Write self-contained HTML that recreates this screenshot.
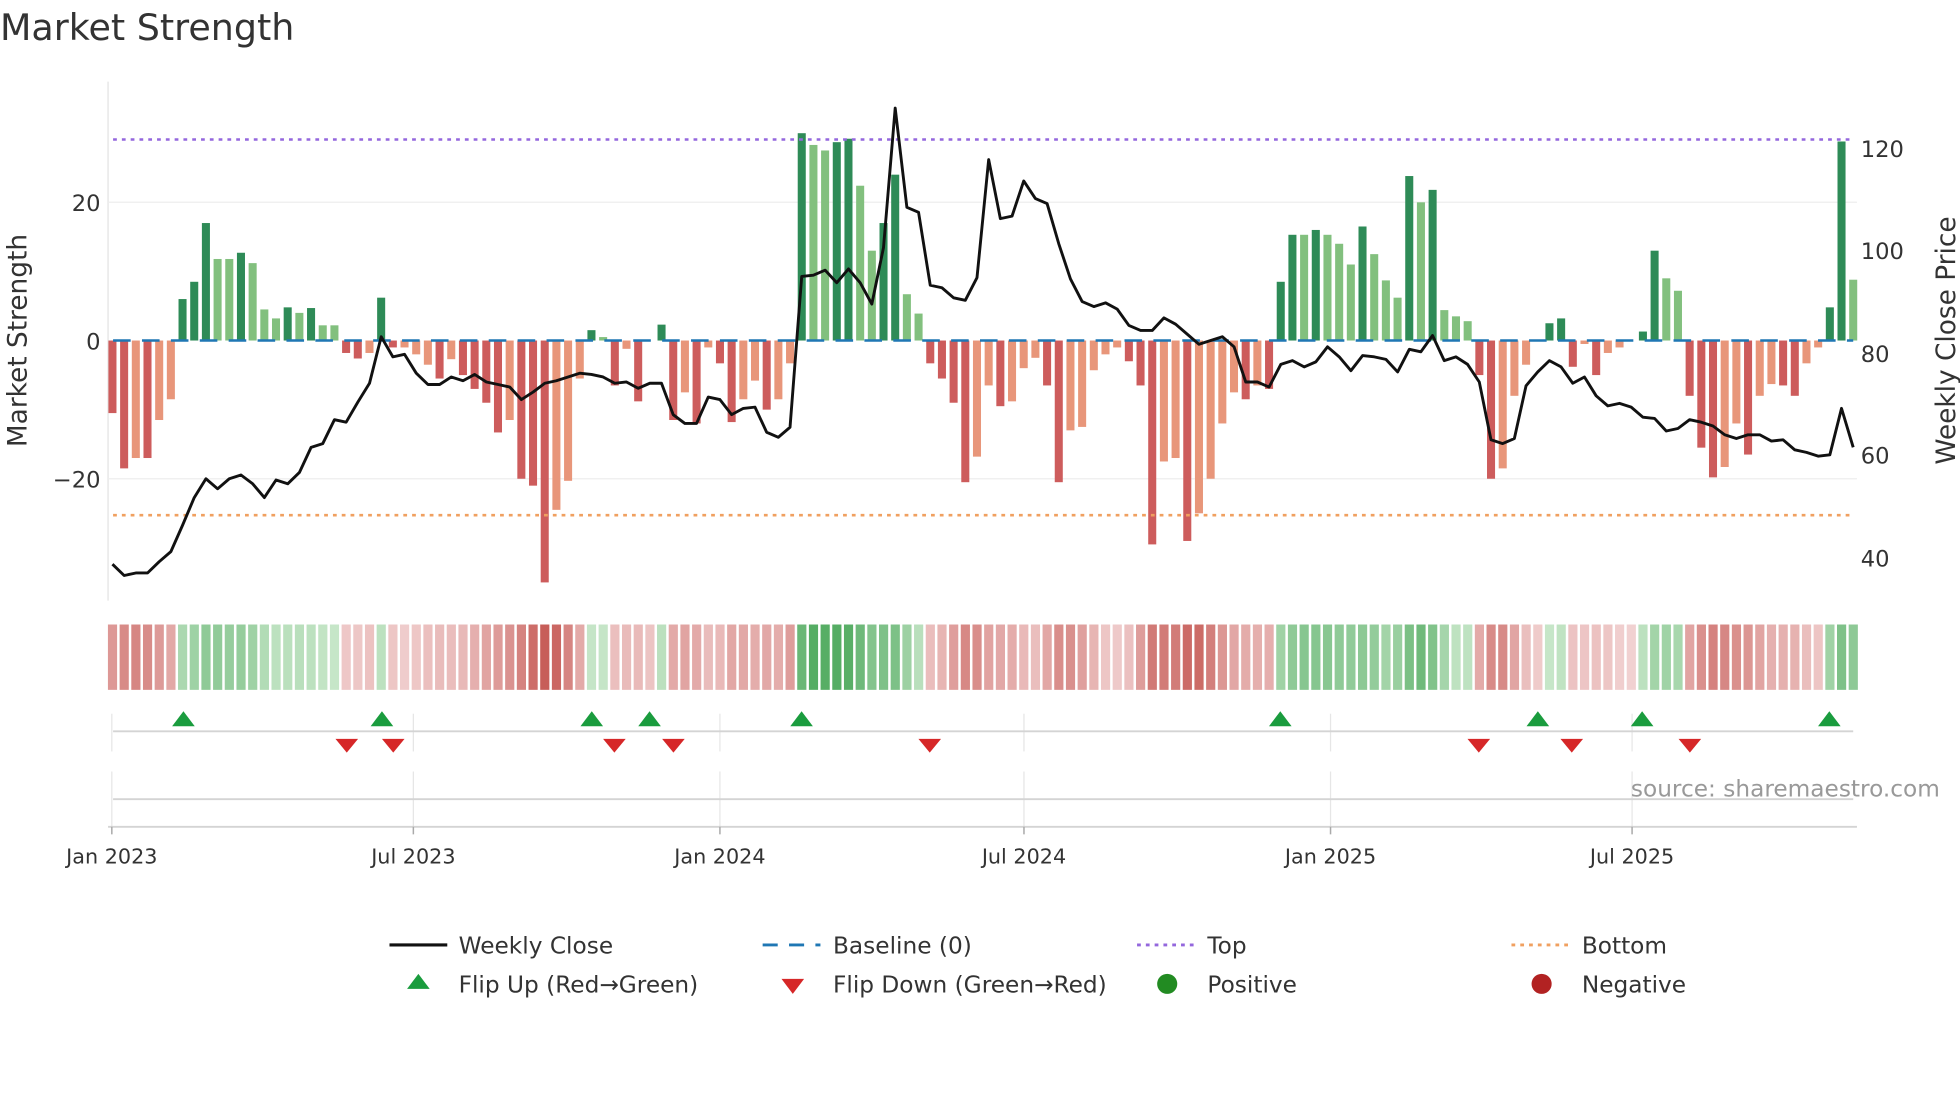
<!DOCTYPE html>
<html><head><meta charset="utf-8"><style>
html,body{margin:0;padding:0;background:#fff;}
svg{display:block;}
text{font-family:"DejaVu Sans","Liberation Sans",sans-serif;fill:#333;}
</style></head><body>
<svg id="s" width="1960" height="1102" viewBox="0 0 1560 877" preserveAspectRatio="none" xmlns="http://www.w3.org/2000/svg">
<rect width="1560" height="877" fill="#fff"/>
<text x="0" y="32" font-size="29">Market Strength</text>
<line x1="86" y1="65" x2="86" y2="478" stroke="#e3e3e3" stroke-width="1"/>
<line x1="86" y1="161" x2="1478" y2="161" stroke="#eeeeee" stroke-width="1"/>
<line x1="86" y1="381" x2="1478" y2="381" stroke="#eeeeee" stroke-width="1"/>
<g font-size="18">
<text x="80" y="168" text-anchor="end">20</text>
<text x="80" y="278" text-anchor="end">0</text>
<text x="80" y="388" text-anchor="end">−20</text>
<text x="1481" y="125">120</text>
<text x="1481" y="206">100</text>
<text x="1481" y="288">80</text>
<text x="1481" y="369">60</text>
<text x="1481" y="451">40</text>
</g>
<text font-size="21" transform="translate(21,271) rotate(-90)" text-anchor="middle">Market Strength</text>
<text font-size="21" transform="translate(1556,271) rotate(-90)" text-anchor="middle">Weekly Close Price</text>
<g id="bars"></g>
<line x1="90" y1="271" x2="1475" y2="271" stroke="#1f77b4" stroke-width="2" stroke-dasharray="14,9"/>
<line x1="90" y1="111" x2="1475" y2="111" stroke="#9467dd" stroke-width="2" stroke-dasharray="3,4"/>
<line x1="90" y1="410" x2="1475" y2="410" stroke="#f0a060" stroke-width="2" stroke-dasharray="3,4"/>
<polyline id="price" fill="none" stroke="#111" stroke-width="2.3" stroke-linejoin="round"/>
<g id="heat"></g>
<g stroke="#e6e6e6" stroke-width="1">
<line x1="89" y1="568" x2="89" y2="598"/><line x1="329" y1="568" x2="329" y2="598"/><line x1="573" y1="568" x2="573" y2="598"/><line x1="815" y1="568" x2="815" y2="598"/><line x1="1059" y1="568" x2="1059" y2="598"/><line x1="1299" y1="568" x2="1299" y2="598"/>
<line x1="89" y1="614" x2="89" y2="658"/><line x1="329" y1="614" x2="329" y2="658"/><line x1="573" y1="614" x2="573" y2="658"/><line x1="815" y1="614" x2="815" y2="658"/><line x1="1059" y1="614" x2="1059" y2="658"/><line x1="1299" y1="614" x2="1299" y2="658"/>
</g>
<line x1="90" y1="582" x2="1475" y2="582" stroke="#d4d4d4" stroke-width="1.5"/>
<line x1="90" y1="636" x2="1475" y2="636" stroke="#d4d4d4" stroke-width="1.5"/>
<line x1="86" y1="658" x2="1478" y2="658" stroke="#d4d4d4" stroke-width="1.5"/>
<g stroke="#aaa" stroke-width="1.2">
<line x1="89" y1="658" x2="89" y2="664"/><line x1="329" y1="658" x2="329" y2="664"/><line x1="573" y1="658" x2="573" y2="664"/><line x1="815" y1="658" x2="815" y2="664"/><line x1="1059" y1="658" x2="1059" y2="664"/><line x1="1299" y1="658" x2="1299" y2="664"/>
</g>
<g id="flips"></g>
<text x="1544" y="634" font-size="18.5" text-anchor="end" style="fill:#999">source: sharemaestro.com</text>
<g font-size="16.5" text-anchor="middle">
<text x="89" y="687">Jan 2023</text><text x="329" y="687">Jul 2023</text><text x="573" y="687">Jan 2024</text><text x="815" y="687">Jul 2024</text><text x="1059" y="687">Jan 2025</text><text x="1299" y="687">Jul 2025</text>
</g>
<g font-size="18.5">
<line x1="310" y1="752" x2="356" y2="752" stroke="#111" stroke-width="2.5"/>
<text x="365" y="759">Weekly Close</text>
<line x1="607" y1="752" x2="653" y2="752" stroke="#1f77b4" stroke-width="2.2" stroke-dasharray="12,9"/>
<text x="663" y="759">Baseline (0)</text>
<line x1="905" y1="752" x2="951" y2="752" stroke="#9467dd" stroke-width="2.2" stroke-dasharray="3,4"/>
<text x="961" y="759">Top</text>
<line x1="1203" y1="752" x2="1249" y2="752" stroke="#f0a060" stroke-width="2.2" stroke-dasharray="3,4"/>
<text x="1259" y="759">Bottom</text>
<polygon points="324,787 342,787 333,775" fill="#1a9c3e"/>
<text x="365" y="790">Flip Up (Red→Green)</text>
<polygon points="622,779 640,779 631,791" fill="#d62728"/>
<text x="663" y="790">Flip Down (Green→Red)</text>
<circle cx="929" cy="783" r="8" fill="#228b22"/>
<text x="961" y="790">Positive</text>
<circle cx="1227" cy="783" r="8" fill="#b22222"/>
<text x="1259" y="790">Negative</text>
</g>
</svg>
<script>
var B=[[-10.5,1],[-18.5,1],[-17,0],[-17,1],[-11.5,0],[-8.5,0],[6,1],[8.5,1],[17,1],[11.8,0],[11.8,0],[12.7,1],[11.2,0],[4.5,0],[3.2,0],[4.8,1],[4,0],[4.7,1],[2.2,0],[2.2,0],
[-1.8,1],[-2.6,1],[-1.8,0],[6.2,1],[-1,1],[-1,0],[-2,0],[-3.5,0],[-5.5,1],[-2.7,0],[-5,1],[-7,1],[-9,1],[-13.3,1],[-11.5,0],[-20,1],[-21,1],[-35,1],[-24.5,0],[-20.3,0],
[-5.5,0],[1.5,1],[0.5,0],[-6.5,1],[-1.2,0],[-8.8,1],[0,0],[2.3,1],[-11.5,1],[-7.5,0],[-12,1],[-1,0],[-3.3,1],[-11.8,1],[-8.5,0],[-5.8,0],[-10,1],[-8.5,0],[-3.3,0],
[30,1],[28.3,0],[27.5,0],[28.7,1],[29.2,1],[22.4,0],[13,0],[17,1],[24,1],[6.7,0],[3.9,0],[-3.3,1],[-5.5,1],[-9,1],[-20.5,1],[-16.8,0],
[-6.5,0],[-9.5,1],[-8.8,0],[-4,0],[-2.5,0],[-6.5,1],[-20.5,1],[-13,0],[-12.5,0],[-4.3,0],[-2,0],[-1,0],[-3,1],[-6.5,1],[-29.5,1],[-17.5,0],[-17,0],[-29,1],[-25,0],[-20,0],[-12,0],[-7.5,0],[-8.5,1],[-6.5,0],[-7,1],
[8.5,1],[15.3,1],[15.3,0],[16,1],[15.3,0],[14,0],[11,0],[16.5,1],[12.5,0],[8.7,0],[6.2,0],[23.8,1],[20,0],[21.8,1],[4.4,0],[3.5,0],[2.8,0],
[-5,1],[-20,1],[-18.5,0],[-8,0],[-3.5,0],[0,0],[2.5,1],[3.2,1],[-3.8,1],[-0.5,0],[-5,1],[-1.8,0],[-1,0],[0,0],[1.3,1],[13,1],[9,0],[7.2,0],
[-8,1],[-15.5,1],[-19.8,1],[-18.3,0],[-12,0],[-16.5,1],[-8,0],[-6.3,0],[-6.5,1],[-8,1],[-3.3,0],[-1,0],[4.8,1],[28.8,1],[8.8,0]];
var P=[449,458,456,456,447,439,418,396,381,389,381,378,385,396,382,385,376,356,353,334,336,320,305,268,284,282,297,306,306,300,303,298,304,306,308,318,312,305,303,300,297,298,300,305,304,309,305,305,330,337,337,316,318,330,325,324,344,348,340,220,219,215,225,214,225,242,197,86,165,169,227,229,237,239,221,127,174,172,144,158,162,194,222,240,244,241,246,259,263,263,253,258,266,274,271,268,276,304,304,308,290,287,292,288,276,284,295,283,284,286,296,278,280,267,287,284,290,304,350,353,349,307,296,287,292,305,300,315,323,321,324,332,333,343,341,334,336,339,346,349,346,346,351,350,358,360,363,362,325,356];
var NS="http://www.w3.org/2000/svg";
function el(t,a,p){var e=document.createElementNS(NS,t);for(var k in a)e.setAttribute(k,a[k]);p.appendChild(e);return e;}
var bars=document.getElementById('bars'),heat=document.getElementById('heat');
var n=B.length,step=1385.5/(n-1);
function mix(a,b,t){var r=[];for(var i=0;i<3;i++)r.push(Math.round(a[i]+(b[i]-a[i])*t));return 'rgb('+r.join(',')+')';}
var prevPos=false;
for(var i=0;i<n;i++){
 var x=89.5+i*step,v=B[i][0],d=B[i][1];
 var h=Math.abs(v)*5.5;
 var c=v>=0?(d?'#2e8b57':'#82c07e'):(d?'#cd5c5c':'#e8967a');
 if(h>0.3) el('rect',{x:x-3.2,y:v>=0?271-h:271,width:6.4,height:h,fill:c},bars);
 var pos=v>0||(v==0&&prevPos);prevPos=pos;
 var sm=(Math.abs(B[Math.max(0,i-1)][0])+2*Math.abs(v)+Math.abs(B[Math.min(n-1,i+1)][0]))/4;
 var t=Math.min(1,Math.pow(sm/30,0.8));
 var hc=pos?mix([214,238,214],[80,170,95],t):mix([243,214,214],[198,90,85],t);
 el('rect',{x:x-3.6,y:497,width:7.3,height:52,fill:hc},heat);
}
var pts=[];for(var i=0;i<P.length;i++){pts.push((89.5+i*1385.5/(P.length-1)).toFixed(1)+','+P[i]);}
document.getElementById('price').setAttribute('points',pts.join(' '));
var fl=document.getElementById('flips');
[146,304,471,517,638,1019,1224,1307,1456].forEach(function(x){el('polygon',{points:(x-9)+',578 '+(x+9)+',578 '+x+',566',fill:'#1a9c3e'},fl);});
[276,313,489,536,740,1177,1251,1345].forEach(function(x){el('polygon',{points:(x-9)+',588 '+(x+9)+',588 '+x+',599',fill:'#d62728'},fl);});
</script>
</body></html>
